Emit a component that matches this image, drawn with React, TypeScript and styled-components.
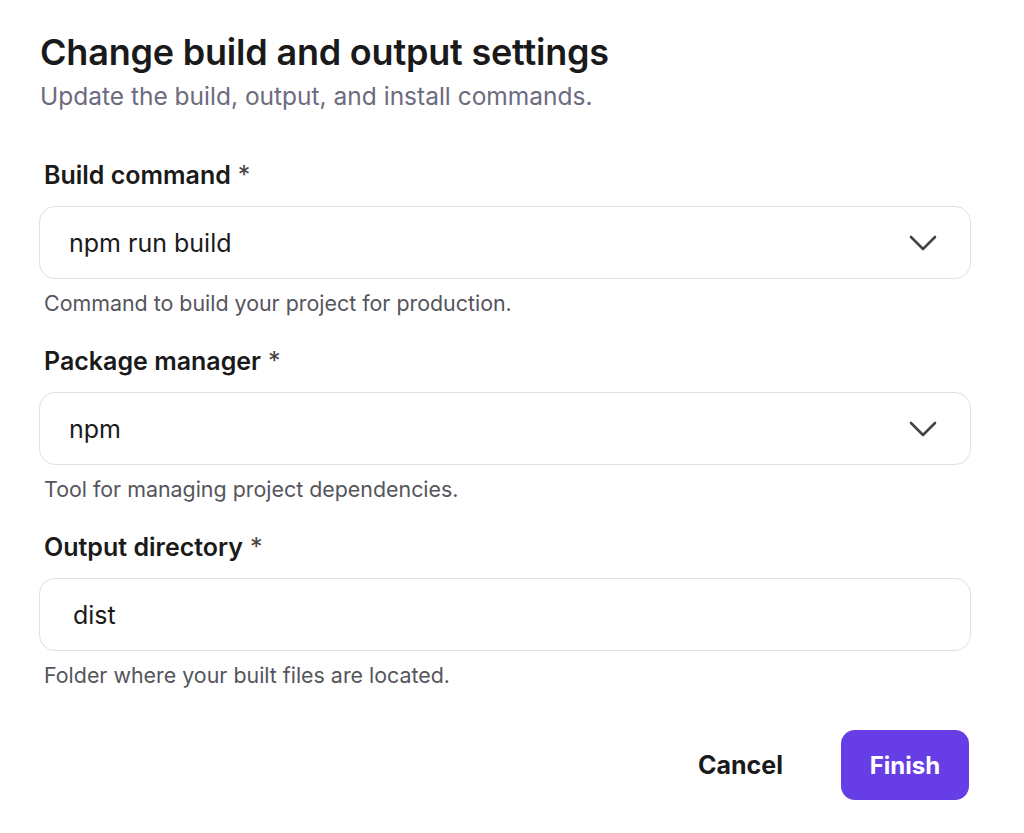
import styled, { createGlobalStyle } from "styled-components";

const GlobalStyle = createGlobalStyle`
  body {
    margin: 0;
    background: #ffffff;
    font-family: Inter, "Noto Sans", "Liberation Sans", sans-serif;
    color: #1a1a1a;
  }
`;

const Dialog = styled.div`
  width: 932px;
  padding: 30px 0 0 39px;
  display: flex;
  flex-direction: column;
`;

const Title = styled.h1`
  margin: 0 0 0 1px;
  font-size: 36px;
  line-height: 44px;
  font-weight: 600;
  letter-spacing: -0.2px;
  color: #1a1a1a;
`;

const Subtitle = styled.p`
  margin: 6px 0 0 1px;
  font-size: 24.5px;
  line-height: 32px;
  font-weight: 400;
  color: #6c6b80;
`;

const Fields = styled.div`
  display: flex;
  flex-direction: column;
  gap: 32px;
  margin-top: 49px;
`;

const Field = styled.div`
  display: flex;
  flex-direction: column;
`;

const Label = styled.label`
  margin: 0 0 17px 5px;
  font-size: 25px;
  line-height: 28px;
  font-weight: 600;
  color: #1a1a1a;

  span {
    font-weight: 400;
    margin-left: 7px;
    color: #444;
  }
`;

const Box = styled.div<{ $indent: number }>`
  box-sizing: border-box;
  height: 73px;
  border: 1.5px solid #e0e0e2;
  border-radius: 16px;
  display: flex;
  align-items: center;
  justify-content: space-between;
  padding: 0 33px 0 ${(p) => p.$indent}px;
  font-size: 25px;
  color: #1a1a1a;
`;

const Help = styled.p`
  margin: 12px 0 0 5px;
  font-size: 21.4px;
  line-height: 24px;
  color: #55555c;
`;

const Actions = styled.div`
  display: flex;
  justify-content: flex-end;
  align-items: center;
  gap: 58px;
  margin-top: 43px;
  padding-right: 2px;
`;

const CancelButton = styled.button`
  background: none;
  border: none;
  font-family: inherit;
  font-size: 25px;
  font-weight: 700;
  color: #1a1a1a;
  padding: 0;
`;

const FinishButton = styled.button`
  width: 128px;
  height: 70px;
  border: none;
  border-radius: 14px;
  background: #673de6;
  color: #ffffff;
  font-family: inherit;
  font-size: 24px;
  font-weight: 700;
`;

const Chevron = () => (
  <svg width="28" height="16" viewBox="0 0 28 16" fill="none">
    <path
      d="M2 2l12 12L26 2"
      stroke="#444"
      strokeWidth="2.6"
      strokeLinecap="round"
      strokeLinejoin="round"
    />
  </svg>
);

const fields = [
  {
    label: "Build command",
    value: "npm run build",
    help: "Command to build your project for production.",
    select: true,
  },
  {
    label: "Package manager",
    value: "npm",
    help: "Tool for managing project dependencies.",
    select: true,
  },
  {
    label: "Output directory",
    value: "dist",
    help: "Folder where your built files are located.",
    select: false,
  },
];

export default function App() {
  return (
    <>
      <GlobalStyle />
      <Dialog>
        <Title>Change build and output settings</Title>
        <Subtitle>Update the build, output, and install commands.</Subtitle>
        <Fields>
          {fields.map((f) => (
            <Field key={f.label}>
              <Label>
                {f.label}
                <span>*</span>
              </Label>
              <Box $indent={f.select ? 29 : 33}>
                {f.value}
                {f.select && <Chevron />}
              </Box>
              <Help>{f.help}</Help>
            </Field>
          ))}
        </Fields>
        <Actions>
          <CancelButton>Cancel</CancelButton>
          <FinishButton>Finish</FinishButton>
        </Actions>
      </Dialog>
    </>
  );
}
